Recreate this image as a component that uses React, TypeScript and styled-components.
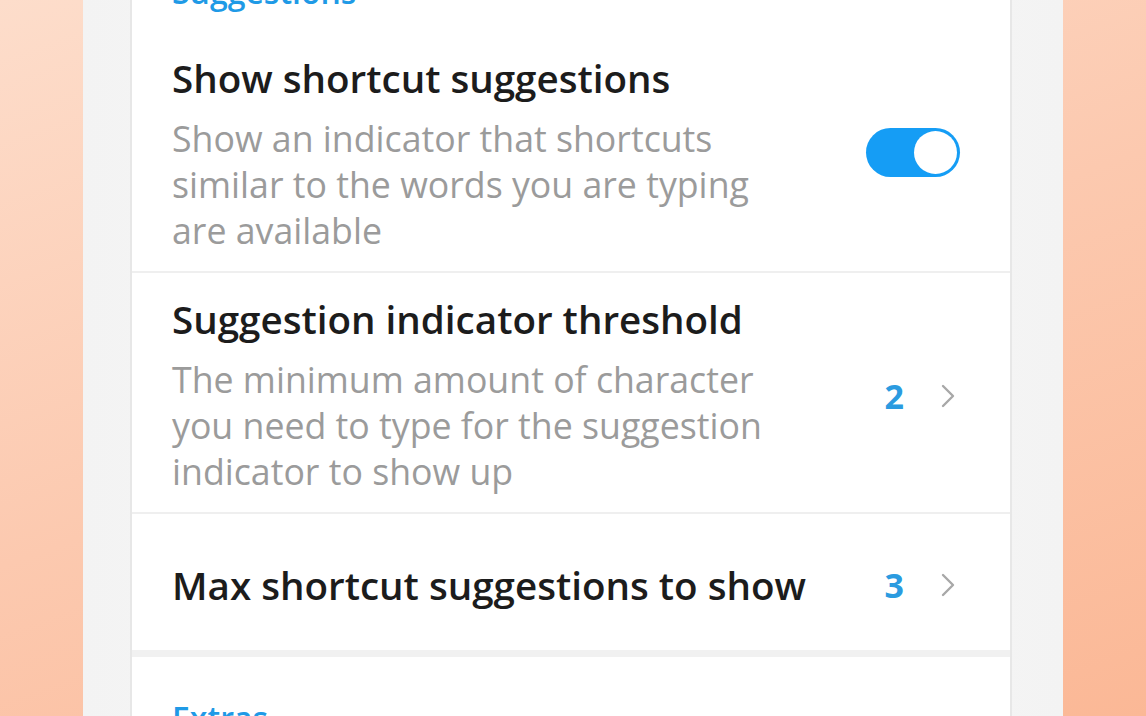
import React from 'react'
import styled, {createGlobalStyle} from 'styled-components'

const GlobalStyle = createGlobalStyle`
  html, body {
    margin: 0;
    padding: 0;
    height: 100%;
    overflow: hidden;
  }

  body {
    font-family: 'Open Sans', 'Noto Sans', sans-serif;
    -webkit-font-smoothing: antialiased;
  }

  #root {
    height: 100%;
  }
`

const Backdrop = styled.div`
  display: flex;
  height: 716px;
  padding-left: 83px;
  background: linear-gradient(160deg, #fdddcb 0%, #fcc9af 50%, #fbb896 100%);
`

const Phone = styled.div`
  display: flex;
  width: 980px;
  height: 100%;
  padding: 0 51px 0 47px;
  box-sizing: border-box;
  background: linear-gradient(90deg, #f3f3f3 0%, #fafafa 50%, #f3f3f3 100%);
`

const Screen = styled.div`
  flex: 1;
  height: 100%;
  overflow: hidden;
  background: #fff;
  border-left: 2px solid #e7e7e7;
  border-right: 2px solid #e7e7e7;
`

// list is scrolled a little: the first header sits partly above the screen
const ScrollContent = styled.div`
  margin-top: -28px;
`

const SectionHeader = styled.div<{$first?: boolean}>`
  padding: ${p => (p.$first ? '0 40px 20px' : '41px 40px 24px')};
  font-size: 32px;
  line-height: 40px;
  font-weight: 600;
  color: #1f9ae6;
`

const Row = styled.div<{$single?: boolean}>`
  display: flex;
  align-items: center;
  gap: 24px;
  padding: ${p => (p.$single ? '48px 50px 42px 40px' : '24px 50px 18px 40px')};
  border-bottom: 2px solid #efefef;
`

const LastRow = styled(Row)`
  border-bottom: 7px solid #f1f1f1;
`

const TextCol = styled.div`
  flex: 1;
  min-width: 0;
`

const Title = styled.div`
  font-size: 38.6px;
  line-height: 44px;
  font-weight: 600;
  color: #1c1c1c;
  white-space: nowrap;
`

const Description = styled.div`
  max-width: 610px;
  margin-top: 15px;
  font-size: 35.7px;
  line-height: 46px;
  font-weight: 500;
  color: #9b9b9b;
`

const Toggle = styled.div<{$on: boolean}>`
  display: flex;
  justify-content: ${p => (p.$on ? 'flex-end' : 'flex-start')};
  align-items: center;
  width: 94px;
  height: 49px;
  margin-top: -4px;
  box-sizing: border-box;
  border-radius: 25px;
  background: ${p => (p.$on ? '#159df5' : '#d5d5d5')};
  padding: 3px;
`

const Knob = styled.div`
  width: 43px;
  height: 43px;
  border-radius: 50%;
  background: #fff;
`

const Trailing = styled.div`
  display: flex;
  align-items: center;
  gap: 36px;
  padding-right: 4px;
`

const Value = styled.span`
  font-size: 34px;
  font-weight: 700;
  color: #2b9be0;
`

const Chevron = () => (
  <svg width="16" height="26" viewBox="0 0 16 26" fill="none">
    <path d="M3 3 L13 13 L3 23" stroke="#a8a8a8" strokeWidth="2.4" strokeLinecap="round" strokeLinejoin="round" />
  </svg>
)

const App = () => {
  return (
    <>
      <GlobalStyle />
      <Backdrop>
        <Phone>
          <Screen>
            <ScrollContent>
              <SectionHeader $first>Suggestions</SectionHeader>
              <Row>
                <TextCol>
                  <Title>Show shortcut suggestions</Title>
                  <Description>
                    Show an indicator that shortcuts similar to the words you are typing are available
                  </Description>
                </TextCol>
                <Toggle $on>
                  <Knob />
                </Toggle>
              </Row>
              <Row>
                <TextCol>
                  <Title>Suggestion indicator threshold</Title>
                  <Description>
                    The minimum amount of character you need to type for the suggestion indicator to show up
                  </Description>
                </TextCol>
                <Trailing>
                  <Value>2</Value>
                  <Chevron />
                </Trailing>
              </Row>
              <LastRow $single>
                <TextCol>
                  <Title>Max shortcut suggestions to show</Title>
                </TextCol>
                <Trailing>
                  <Value>3</Value>
                  <Chevron />
                </Trailing>
              </LastRow>
              <SectionHeader>Extras</SectionHeader>
            </ScrollContent>
          </Screen>
        </Phone>
      </Backdrop>
    </>
  )
}

export default App
